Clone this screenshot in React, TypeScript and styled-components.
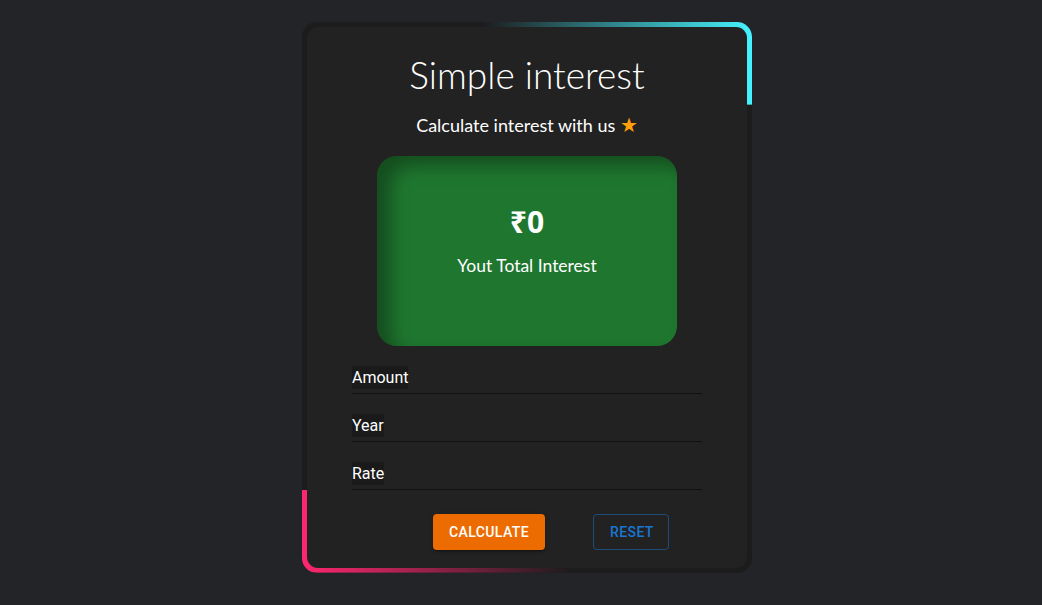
import React from "react";
import styled, { createGlobalStyle } from "styled-components";

const Global = createGlobalStyle`
  html, body { margin: 0; padding: 0; background: #232428; }
  body { font-family: Roboto, "Liberation Sans", sans-serif; }
`;

const Page = styled.div`
  min-height: 605px;
  display: flex;
  justify-content: center;
  align-items: flex-start;
  padding: 22px 0 0 12px;
  box-sizing: border-box;
`;

const Frame = styled.div`
  width: 450px;
  height: 551px;
  box-sizing: border-box;
  padding: 5px;
  border-radius: 15px;
  background:
    linear-gradient(to right, transparent, #45f3ff) top right / 60% 15% no-repeat,
    linear-gradient(to left, transparent, #ff2770) bottom left / 60% 15% no-repeat,
    #1c1c1d;
  display: flex;
`;

const Card = styled.div`
  flex: 1;
  background: #222222;
  border-radius: 11px;
  display: flex;
  flex-direction: column;
  align-items: center;
  padding-top: 25px;
`;

const displayFont = `Lato, "DejaVu Sans Condensed", sans-serif`;

const Title = styled.h1`
  margin: 0;
  font-family: ${displayFont};
  font-weight: 300;
  font-size: 37px;
  line-height: 46px;
  color: #ffffff;
`;

const Subtitle = styled.p`
  margin: 15px 0 0;
  font-family: ${displayFont};
  font-weight: 400;
  font-size: 18px;
  line-height: 24px;
  color: #ffffff;
`;

const Star = styled.span`
  color: #ff9f0a;
  font-family: "DejaVu Sans", sans-serif;
  font-size: 20px;
`;

const ResultBox = styled.div`
  margin-top: 19px;
  width: 300px;
  height: 190px;
  border-radius: 20px;
  background: #1f772f;
  box-shadow: inset 14px 10px 18px rgba(0, 0, 0, 0.35);
  display: flex;
  flex-direction: column;
  align-items: center;
  padding-top: 48px;
  box-sizing: border-box;
  color: #ffffff;
  font-family: ${displayFont};
`;

const Amount = styled.div`
  font-family: "Noto Sans", "DejaVu Sans", sans-serif;
  font-weight: 700;
  font-size: 30px;
  line-height: 36px;
`;

const ResultLabel = styled.div`
  margin-top: 14px;
  font-size: 17.5px;
  line-height: 24px;
`;

const Form = styled.div`
  width: 350px;
  margin-top: 0;
  display: flex;
  flex-direction: column;
`;

const Field = styled.div`
  height: 47px;
  border-bottom: 1px solid #111111;
  display: flex;
  align-items: flex-end;
`;

const Label = styled.label`
  font-family: Roboto, sans-serif;
  font-size: 16px;
  line-height: 23px;
  color: #ffffff;
  background: #1a1a1a;
  margin-bottom: 4px;
`;

const Buttons = styled.div`
  width: 350px;
  box-sizing: border-box;
  padding-left: 48px;
  margin-top: 24px;
  display: flex;
  justify-content: center;
  gap: 48px;
`;

const Button = styled.button<{ $variant: "contained" | "outlined" }>`
  height: 36px;
  box-sizing: border-box;
  padding: 0 16px;
  border-radius: 4px;
  font-family: Roboto, sans-serif;
  font-weight: 500;
  font-size: 14px;
  letter-spacing: 0.4px;
  text-transform: uppercase;
  cursor: pointer;
  ${({ $variant }) =>
    $variant === "contained"
      ? `background: #ed6c02; color: #ffffff; border: none; width: 112px; box-shadow: 0 3px 1px -2px rgba(0,0,0,.2), 0 2px 2px rgba(0,0,0,.14), 0 1px 5px rgba(0,0,0,.12);`
      : `background: transparent; color: #1976d2; border: 1px solid rgba(25,118,210,0.5); width: 76px;`}
`;

export default function App() {
  return (
    <>
      <Global />
      <Page>
        <Frame>
          <Card>
            <Title>Simple interest</Title>
            <Subtitle>
              Calculate interest with us <Star>★</Star>
            </Subtitle>
            <ResultBox>
              <Amount>₹0</Amount>
              <ResultLabel>Yout Total Interest</ResultLabel>
            </ResultBox>
            <Form>
              <Field>
                <Label>Amount</Label>
              </Field>
              <Field>
                <Label>Year</Label>
              </Field>
              <Field>
                <Label>Rate</Label>
              </Field>
            </Form>
            <Buttons>
              <Button $variant="contained">Calculate</Button>
              <Button $variant="outlined">Reset</Button>
            </Buttons>
          </Card>
        </Frame>
      </Page>
    </>
  );
}
